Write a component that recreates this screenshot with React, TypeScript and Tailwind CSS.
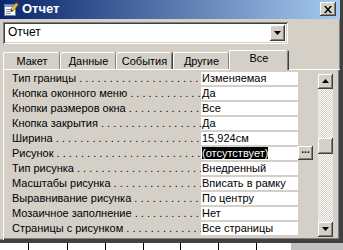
import React from "react";

const rows: [string, string][] = [
  ["Тип границы", "Изменяемая"],
  ["Кнопка оконного меню", "Да"],
  ["Кнопки размеров окна", "Все"],
  ["Кнопка закрытия", "Да"],
  ["Ширина", "15,924см"],
  ["Рисунок", "(отсутствует)"],
  ["Тип рисунка", "Внедренный"],
  ["Масштабы рисунка", "Вписать в рамку"],
  ["Выравнивание рисунка", "По центру"],
  ["Мозаичное заполнение", "Нет"],
  ["Страницы с рисунком", "Все страницы"],
];

const raised =
  "shadow-[inset_-1px_-1px_#404040,inset_1px_1px_#ffffff,inset_-2px_-2px_#808080,inset_2px_2px_#d4d0c8]";
const sunken =
  "shadow-[inset_1px_1px_#808080,inset_-1px_-1px_#ffffff,inset_2px_2px_#404040,inset_-2px_-2px_#d4d0c8]";

const dots = " . . . . . . . . . . . . . . . . . . . . . . . . . . . . . . . . . . . .";

function TitleIcon() {
  return (
    <svg width="16" height="16" viewBox="0 0 16 16" className="shrink-0">
      <rect x="1.5" y="3.5" width="11" height="11" fill="#ffffff" stroke="#6b7b9c" />
      <rect x="2" y="4" width="10" height="2" fill="#7d9ad6" />
      <line x1="3" y1="8.5" x2="10" y2="8.5" stroke="#8a96b0" />
      <line x1="3" y1="10.5" x2="10" y2="10.5" stroke="#8a96b0" />
      <line x1="3" y1="12.5" x2="8" y2="12.5" stroke="#8a96b0" />
      <path d="M8 8 L13 2 L15 4 L10 10 Z" fill="#f2c230" stroke="#8a6a10" strokeWidth="0.7" />
      <path d="M8 8 L10 10 L7.5 10.5 Z" fill="#333" />
      <path d="M13 2 L15 4 L15.6 3.2 L13.8 1.3 Z" fill="#d05050" />
    </svg>
  );
}

function Tab({ label, selected, w }: { label: string; selected?: boolean; w: string }) {
  if (selected) {
    return (
      <div
        className={`${w} relative z-10 -mb-[1px] h-[20px] rounded-t-[2px] border-l border-t border-white bg-[#d4d0c8] shadow-[inset_-1px_0_#808080,1px_0_#404040] flex justify-center pt-[1px]`}
      >
        {label}
      </div>
    );
  }
  return (
    <div
      className={`${w} h-[17px] rounded-t-[2px] border-l border-t border-white bg-[#d4d0c8] shadow-[inset_-1px_0_#808080,1px_0_#404040] flex justify-center pt-[2px]`}
    >
      {label}
    </div>
  );
}

export default function App() {
  return (
    <div
      className="w-[343px] h-[250px] overflow-hidden bg-white text-[11px] leading-[13px] text-black"
      style={{ fontFamily: '"Liberation Sans", Arial, sans-serif' }}
    >
      <div className="w-[343px] h-[243px] bg-[#d4d0c8] flex flex-col border-r-[3px] border-b-[3px] border-r-[#404040] border-b-[#404040] shadow-[inset_-1px_-1px_#808080]">
        {/* Title bar */}
        <div className="h-[19px] flex items-center bg-[linear-gradient(to_right,#0a246a,#a6caf0)] pl-[3px] pr-[4px]">
          <TitleIcon />
          <span className="ml-[3px] text-white font-bold text-[13px] leading-[16px]">Отчет</span>
          <div className="flex-1" />
          <div className={`w-[16px] h-[14px] bg-[#d4d0c8] ${raised} flex items-center justify-center`}>
            <svg width="8" height="7" viewBox="0 0 8 7">
              <path d="M0 0h2l2 2.5L6 0h2L5 3.5 8 7H6L4 4.5 2 7H0l3-3.5z" fill="#000" />
            </svg>
          </div>
        </div>

        {/* Combo */}
        <div className="pl-[3px] pt-[3px]">
          <div className={`w-[285px] h-[22px] bg-white ${sunken} flex items-center pl-[5px] pr-[3px]`}>
            <span className="flex-1 text-[12px]">Отчет</span>
            <div className={`w-[15px] h-[16px] bg-[#d4d0c8] ${raised} flex items-center justify-center`}>
              <svg width="7" height="4" viewBox="0 0 7 4">
                <path d="M0 0h7L3.5 4z" fill="#000" />
              </svg>
            </div>
          </div>
        </div>

        {/* Tabs */}
        <div className="pl-[3px] pt-[5px] h-[25px] flex items-end">
          <Tab label="Макет" w="w-[57px]" />
          <Tab label="Данные" w="w-[56px]" />
          <Tab label="События" w="w-[56px]" />
          <div className="w-[1px]" />
          <Tab label="Другие" w="w-[56px]" />
          <Tab label="Все" w="w-[59px]" selected />
        </div>

        {/* Panel */}
        <div className="ml-[3px] w-[337px] h-[172px] border-l border-t border-white shadow-[inset_-1px_-1px_#404040,inset_-2px_-2px_#808080] flex pl-[8px] pt-[2px]">
          <div className="w-[306px] flex flex-col">
            {rows.map(([label, value], i) => {
              const sel = i === 5;
              return (
                <div key={label} className="h-[15px] flex">
                  <div className="w-[189px] h-[13px] overflow-hidden whitespace-nowrap">
                    {label}
                    {dots}
                  </div>
                  <div className="w-[97px] h-[13px] bg-white overflow-hidden whitespace-nowrap pl-[1px]">
                    {sel ? <span className="bg-black text-white">{value}</span> : value}
                  </div>
                  {sel && (
                    <div className={`w-[15px] h-[14px] -mt-[1px] bg-[#d4d0c8] ${raised} flex items-start justify-center text-[10px] leading-[8px] font-bold`}>
                      ...
                    </div>
                  )}
                </div>
              );
            })}
          </div>
          {/* Scrollbar */}
          <div className="w-[15px] mt-[2px] h-[163px] flex flex-col">
            <div className={`h-[15px] bg-[#d4d0c8] ${raised} flex items-center justify-center`}>
              <svg width="7" height="4" viewBox="0 0 7 4">
                <path d="M0 4h7L3.5 0z" fill="#000" />
              </svg>
            </div>
            <div className="flex-1 flex flex-col bg-[repeating-conic-gradient(#ffffff_0%_25%,#d4d0c8_0%_50%)] bg-size-[2px_2px]">
              <div className="h-[49px]" />
              <div className={`h-[16px] bg-[#d4d0c8] ${raised}`} />
            </div>
            <div className={`h-[15px] bg-[#d4d0c8] ${raised} flex items-center justify-center`}>
              <svg width="7" height="4" viewBox="0 0 7 4">
                <path d="M0 0h7L3.5 4z" fill="#000" />
              </svg>
            </div>
          </div>
        </div>
      </div>
      {/* Background content below window */}
      <div className="h-[7px] flex">
        <div className="w-[29px] border-r border-black" />
        <div className="w-[39px] border-r border-black" />
        <div className="w-[38px] border-r border-black" />
        <div className="w-[38px] border-r border-black" />
        <div className="w-[37px] border-r border-black" />
        <div className="w-[38px] border-r border-black" />
        <div className="w-[38px] border-r border-black" />
        <div className="w-[34px]" />
        <div className="flex-1 bg-[#c0c0c0]" />
      </div>
    </div>
  );
}
